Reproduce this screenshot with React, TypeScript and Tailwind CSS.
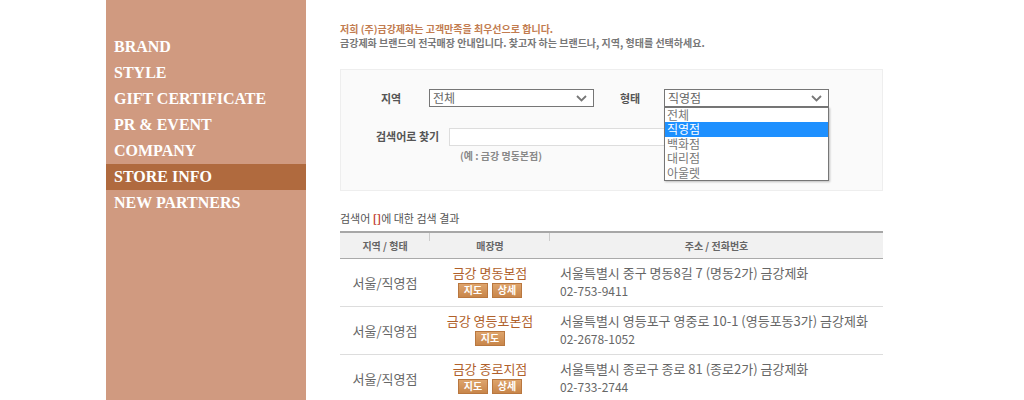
import React from 'react';

const kr = "font-['Noto_Sans_CJK_KR',sans-serif]";

const menus = ['BRAND', 'STYLE', 'GIFT CERTIFICATE', 'PR & EVENT', 'COMPANY', 'STORE INFO', 'NEW PARTNERS'];

const stores = [
  { area: '서울/직영점', name: '금강 명동본점', addr: '서울특별시 중구 명동8길 7 (명동2가) 금강제화', tel: '02-753-9411', detail: true },
  { area: '서울/직영점', name: '금강 영등포본점', addr: '서울특별시 영등포구 영중로 10-1 (영등포동3가) 금강제화', tel: '02-2678-1052', detail: false },
  { area: '서울/직영점', name: '금강 종로지점', addr: '서울특별시 종로구 종로 81 (종로2가) 금강제화', tel: '02-733-2744', detail: true },
];

const SmallBtn = ({ label }: { label: string }) => (
  <span className="inline-flex h-[15px] w-[30px] items-center justify-center border border-[#b9773f] bg-gradient-to-b from-[#dea46c] to-[#c8864a] text-[10px] font-bold leading-none text-white">
    {label}
  </span>
);

const Chevron = () => (
  <svg width="11" height="7" viewBox="0 0 11 7" className="text-[#777]">
    <path d="M1 1l4.5 4.5L10 1" fill="none" stroke="currentColor" strokeWidth="1.8" />
  </svg>
);

const FakeSelect = ({ value }: { value: string }) => (
  <div className="flex h-[18px] w-[165px] items-center justify-between border border-[#767676] bg-white pl-[3px] pr-[6px] text-[12px] font-normal leading-none text-[#666]">
    <span>{value}</span>
    <Chevron />
  </div>
);

export default function App() {
  return (
    <div className={`flex h-[400px] w-[1024px] overflow-hidden bg-white ${kr}`}>
      <div className="w-[106px]" />
      <aside className="w-[200px] bg-[#d09a80] pt-[34px]">
        {menus.map((m) => (
          <div
            key={m}
            className={`flex h-[26px] items-center pl-[8px] font-['Liberation_Serif',serif] text-[16px] font-bold text-white ${m === 'STORE INFO' ? 'bg-[#b06a3e]' : ''}`}
          >
            {m}
          </div>
        ))}
      </aside>

      <main className="ml-[34px] w-[543px] pt-[22px]">
        <p className="text-[10px] font-bold leading-[14px] text-[#c27c50]">저희 (주)금강제화는 고객만족을 최우선으로 합니다.</p>
        <p className="text-[10px] font-bold leading-[14px] text-[#777]">금강제화 브랜드의 전국매장 안내입니다. 찾고자 하는 브랜드나, 지역, 형태를 선택하세요.</p>

        <div className="mt-[19px] h-[122px] border border-[#eeeeee] bg-[#fafafa] px-[35px] pt-[19px]">
          <div className="flex items-center text-[11px] font-bold text-[#555]">
            <span className="ml-[5px] w-[48px]">지역</span>
            <FakeSelect value="전체" />
            <span className="ml-[26px] w-[44px]">형태</span>
            <div className="relative">
              <FakeSelect value="직영점" />
              <div className="absolute left-0 top-[18px] z-10 w-[165px] border border-[#767676] bg-white text-[12px] font-normal leading-[14.4px] text-[#777] shadow-[1px_1px_2px_rgba(0,0,0,0.25)]">
                {['전체', '직영점', '백화점', '대리점', '아울렛'].map((o) => (
                  <div key={o} className={`px-[2px] ${o === '직영점' ? 'bg-[#1e90ff] text-white' : ''}`}>{o}</div>
                ))}
              </div>
            </div>
          </div>
          <div className="mt-[21px] flex items-start">
            <span className="w-[73px] text-[11px] font-bold text-[#555]">검색어로 찾기</span>
            <div>
              <div className="h-[18px] w-[310px] border border-[#ddd] bg-white" />
              <p className="mt-[2px] pl-[11px] text-[10px] font-bold text-[#888]">(예 : 금강 명동본점)</p>
            </div>
          </div>
        </div>

        <p className="mt-[19px] text-[11px] text-[#555]">
          검색어 <span className="font-bold text-[#c0392b]">[]</span>에 대한 검색 결과
        </p>

        <table className="mt-[4px] w-full table-fixed border-collapse">
          <thead>
            <tr className="h-[27px] border-t-2 border-b border-t-[#a7a7a7] border-b-[#aaa] bg-[#f1f1f1] text-[10px] font-bold text-[#666]">
              <th className="relative w-[90px] font-bold">지역 / 형태<span className="absolute right-0 top-0 h-[8px] w-px bg-[#ccc]" /></th>
              <th className="relative w-[120px] font-bold">매장명<span className="absolute right-0 top-0 h-[8px] w-px bg-[#ccc]" /></th>
              <th className="font-bold">주소 / 전화번호</th>
            </tr>
          </thead>
          <tbody>
            {stores.map((s) => (
              <tr key={s.name} className="h-[48px] border-b border-[#ddd]">
                <td className="text-center text-[13px] text-[#666]">{s.area}</td>
                <td className="pb-[3px] text-center">
                  <div className="text-[13px] leading-[15px] text-[#b0602a]">{s.name}</div>
                  <div className="mt-[3px] flex justify-center gap-[4px]">
                    <SmallBtn label="지도" />
                    {s.detail && <SmallBtn label="상세" />}
                  </div>
                </td>
                <td className="pb-[2px] pl-[10px] leading-[18px] text-[#666]">
                  <div className="text-[13px]">{s.addr}</div>
                  <div className="text-[12px]">{s.tel}</div>
                </td>
              </tr>
            ))}
          </tbody>
        </table>
      </main>
    </div>
  );
}
